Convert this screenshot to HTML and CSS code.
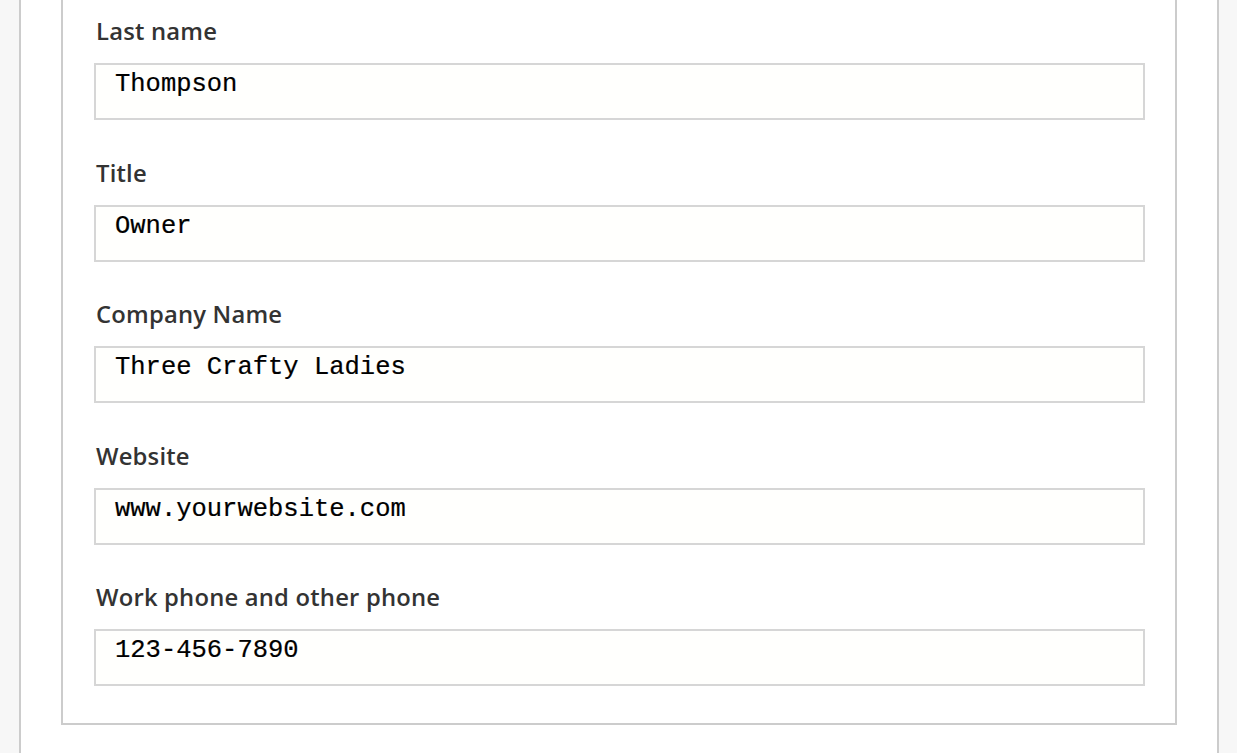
FILE: index.html
```html
<!DOCTYPE html>
<html lang="en">
<head>
<meta charset="utf-8">
<title>Contact form</title>
<link rel="stylesheet" href="styles.css">
</head>
<body>
<div class="page">
  <div class="panel">
    <div class="card">
      <div class="field">
        <div class="label">Last name</div>
        <div class="input">Thompson</div>
      </div>
      <div class="field">
        <div class="label">Title</div>
        <div class="input">Owner</div>
      </div>
      <div class="field">
        <div class="label">Company Name</div>
        <div class="input">Three Crafty Ladies</div>
      </div>
      <div class="field">
        <div class="label">Website</div>
        <div class="input">www.yourwebsite.com</div>
      </div>
      <div class="field">
        <div class="label">Work phone and other phone</div>
        <div class="input">123-456-7890</div>
      </div>
    </div>
  </div>
</div>
</body>
</html>
```
FILE: styles.css
```css
html, body {
  margin: 0;
  padding: 0;
  background: #f7f7f7;
  height: 100%;
  overflow: hidden;
}

.page {
  padding-left: 19px;
  height: 100%;
}

.panel {
  width: 1156px;
  height: 100%;
  background: #ffffff;
  border-left: 2px solid #cccccc;
  border-right: 2px solid #cccccc;
  padding-left: 40px;
  box-sizing: content-box;
}

.card {
  border: 2px solid #cccccc;
  border-top: 0;
  padding: 16px 30px 0 31px;
  box-sizing: content-box;
  width: 1051px;
}

.field {
  padding-bottom: 37.5px;
}

.field:last-child {
  padding-bottom: 37px;
}

.label {
  font-family: "Open Sans", "Noto Sans", sans-serif;
  font-weight: 600;
  font-size: 23.8px;
  line-height: 30px;
  color: #333333;
  margin: 0 0 17px 2px;
  letter-spacing: 0.2px;
}

.input {
  border: 2px solid #d6d6d6;
  background: #fffffd;
  font-family: "Liberation Mono", "DejaVu Sans Mono", monospace;
  font-size: 25.5px;
  line-height: 30px;
  color: #000000;
  padding: 5px 0 0 19px;
  box-sizing: border-box;
  height: 57px;
  -webkit-text-stroke: 0.2px #000000;
}
```
